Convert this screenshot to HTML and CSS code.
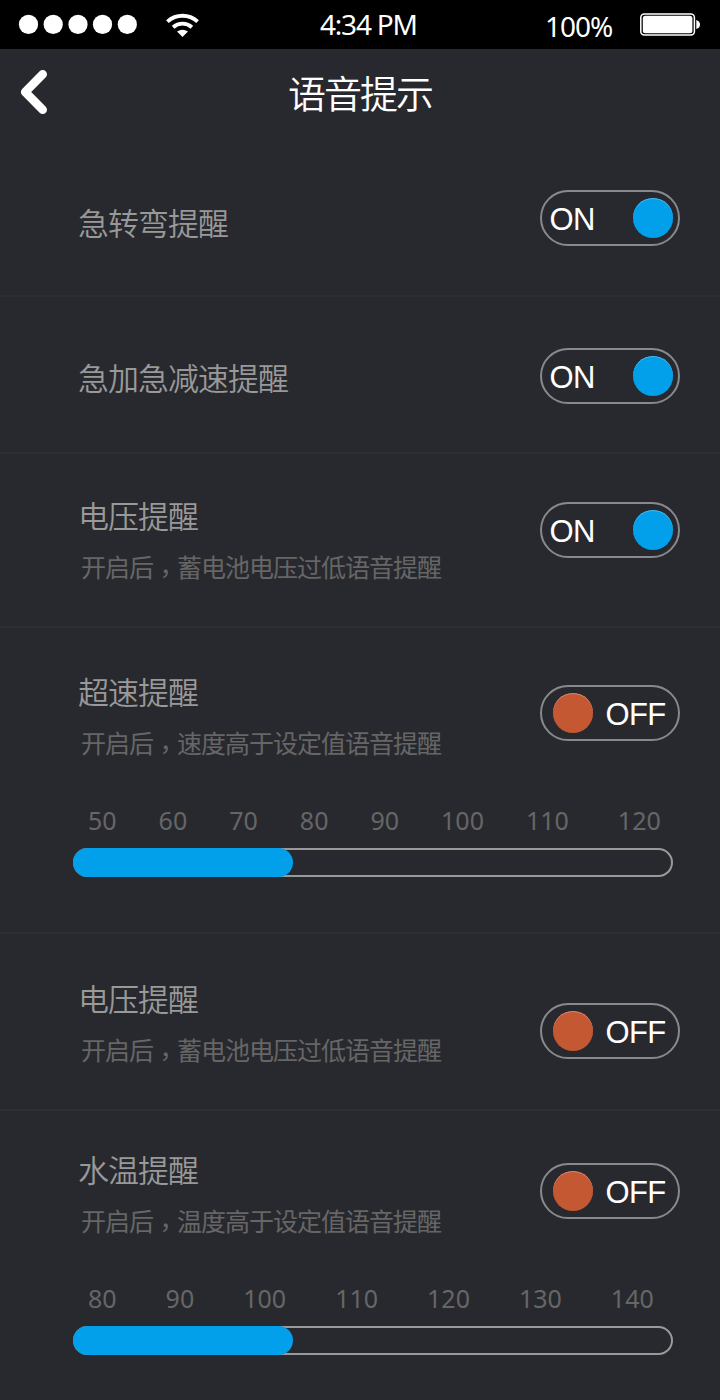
FILE: index.html
```html
<!DOCTYPE html>
<html lang="zh-CN">
<head>
<meta charset="utf-8">
<title>语音提示</title>
<link rel="stylesheet" href="styles.css">
</head>
<body>
<div class="status">
  <svg class="signal" width="120" height="20" viewBox="0 0 120 20" fill="#fff"><circle cx="10.5" cy="10.4" r="9.6"/><circle cx="35.2" cy="10.4" r="9.6"/><circle cx="60" cy="10.4" r="9.6"/><circle cx="84.5" cy="10.4" r="9.6"/><circle cx="109.3" cy="10.4" r="9.6"/></svg>
  <svg class="wifi" width="34" height="24" viewBox="0 0 34 24"><g fill="none" stroke="#fff" stroke-width="3.9"><path d="M1.4 8.6Q8 2.8 16.5 2.8T31.6 8.6"/><path d="M7.1 14.2Q11.2 10.6 16.5 10.6T25.9 14.2"/></g><path d="M11 18.6Q16.5 14.9 22 18.6L16.5 23.9Z" fill="#fff"/></svg>
  <span class="time">4:34 PM</span>
  <span class="percent">100%</span>
  <svg class="battery" width="61" height="24" viewBox="0 0 61 24"><rect x=".8" y="1.9" width="53.6" height="21.2" rx="3.5" fill="none" stroke="#fff" stroke-width="1.5"/><rect x="2.8" y="3.8" width="49.6" height="17.4" rx="2.5" fill="#fff"/><path d="M56.3 8Q60 9 60 12.5T56.3 17Z" fill="#fff"/></svg>
</div>
<header class="nav">
  <svg class="back" width="28" height="46" viewBox="0 0 28 46"><path d="M22.7 5.3L5.2 23L22.7 40.7" fill="none" stroke="#fff" stroke-width="8.6" stroke-linecap="round" stroke-linejoin="round"/></svg>
  <h1 class="heading">语音提示</h1>
</header>
<main>
  <section class="row row-turn">
    <div class="info"><h2 class="title">急转弯提醒</h2></div>
    <div class="toggle on"><span class="label">ON</span><i class="knob"></i></div>
  </section>
  <section class="row row-accel">
    <div class="info"><h2 class="title">急加急减速提醒</h2></div>
    <div class="toggle on"><span class="label">ON</span><i class="knob"></i></div>
  </section>
  <section class="row row-voltage">
    <div class="info"><h2 class="title">电压提醒</h2><p class="desc">开启后<span class="comma" lang="zh-TW">，</span>蓄电池电压过低语音提醒</p></div>
    <div class="toggle on"><span class="label">ON</span><i class="knob"></i></div>
  </section>
  <section class="row row-speed">
    <div class="info"><h2 class="title">超速提醒</h2><p class="desc">开启后<span class="comma" lang="zh-TW">，</span>速度高于设定值语音提醒</p></div>
    <div class="toggle off"><i class="knob"></i><span class="label">OFF</span></div>
    <div class="range">
      <div class="ticks ticks-speed"><span>50</span><span>60</span><span>70</span><span>80</span><span>90</span><span>100</span><span>110</span><span>120</span></div>
      <div class="track"><div class="fill"></div></div>
    </div>
  </section>
  <section class="row row-voltage2">
    <div class="info"><h2 class="title">电压提醒</h2><p class="desc">开启后<span class="comma" lang="zh-TW">，</span>蓄电池电压过低语音提醒</p></div>
    <div class="toggle off"><i class="knob"></i><span class="label">OFF</span></div>
  </section>
  <section class="row row-water">
    <div class="info"><h2 class="title">水温提醒</h2><p class="desc">开启后<span class="comma" lang="zh-TW">，</span>温度高于设定值语音提醒</p></div>
    <div class="toggle off"><i class="knob"></i><span class="label">OFF</span></div>
    <div class="range">
      <div class="ticks ticks-temp"><span>80</span><span>90</span><span>100</span><span>110</span><span>120</span><span>130</span><span>140</span></div>
      <div class="track"><div class="fill"></div></div>
    </div>
  </section>
</main>
</body>
</html>
```
FILE: styles.css
```css
* { box-sizing: border-box; margin: 0; padding: 0; }
html, body { width: 720px; height: 1400px; overflow: hidden; }
body { background: #28292e; font-family: "Noto Sans CJK SC", sans-serif; }
svg { display: block; flex: none; }

.status {
  display: flex;
  align-items: flex-start;
  height: 49px;
  padding-left: 18px;
  background: #000;
  color: #fff;
  font: 28px/36px "Noto Sans", sans-serif;
}
.signal { margin-top: 14px; }
.wifi { margin: 13px 0 0 28px; }
.time { width: 225px; margin: 6px 0 0 120px; letter-spacing: -1.2px; }
.percent { width: 95px; margin-top: 8px; letter-spacing: -1px; }
.battery { margin-top: 12px; }

.nav {
  display: grid;
  grid-template-columns: 60px 1fr 60px;
  height: 86px;
  padding-top: 20px;
}
.back { margin-left: 20px; }
.heading {
  color: #fff;
  font-size: 38px;
  font-weight: 350;
  line-height: 46px;
  letter-spacing: -2px;
  text-align: center;
}

.row {
  display: grid;
  grid-template-columns: 1fr 140px;
  align-content: start;
  align-items: start;
  padding: 0 40px 0 78px;
  border-bottom: 2px solid #2e2f33;
}
.row-turn { height: 162px; --title: 67px; --toggle: 55px; }
.row-accel { height: 157px; --title: 60px; --toggle: 51px; }
.row-voltage { height: 174px; --title: 41px; --toggle: 48px; }
.row-speed { height: 306px; --title: 43px; --toggle: 57px; }
.row-voltage2 { height: 177px; --title: 44px; --toggle: 69px; }
.row-water { height: 289px; border-bottom: 0; --title: 38px; --toggle: 52px; }

.info { padding-top: var(--title); }
.title {
  color: #999;
  font-size: 31px;
  font-weight: 350;
  line-height: 40px;
  letter-spacing: -1px;
}
.desc {
  height: 36px;
  margin-top: 13px;
  padding-left: 3px;
  color: #666;
  font-size: 25px;
  line-height: 36px;
  letter-spacing: -1px;
}
.comma {
  font-family: "Noto Sans CJK TC", sans-serif;
  line-height: 0;
  vertical-align: -6px;
}

.toggle {
  display: flex;
  align-items: center;
  height: 56px;
  margin-top: var(--toggle);
  border: 2px solid #88898d;
  border-radius: 28px;
  color: #fff;
  font: 31px/34px "Liberation Sans", Arial, sans-serif;
  letter-spacing: -0.6px;
}
.on { justify-content: space-between; padding: 0 5px 0 7.5px; }
.off { gap: 12.5px; padding-left: 11px; }
.label { padding-top: 4px; }
.knob { width: 40px; height: 40px; border-radius: 50%; }
.on .knob { background: #029fea; box-shadow: inset 0 1px #43b5eb; }
.off .knob { background: #c45833; box-shadow: inset 0 1px #d28468; }

.range { grid-column: 1 / -1; width: 600px; margin: 43px 0 0 -5px; }
.ticks {
  display: flex;
  height: 36px;
  padding-left: 15px;
  color: #666;
  font: 25px/34px "Noto Sans", sans-serif;
}
.ticks-speed { gap: 42px; }
.ticks-speed span:last-child { margin-left: 7px; }
.ticks-temp { gap: 49px; }
.track {
  height: 29px;
  margin-top: 9px;
  border: 2px solid #999;
  border-radius: 15px;
}
.fill {
  width: 220px;
  height: 29px;
  margin: -2px 0 0 -2px;
  border-radius: 15px;
  background: #029fea;
}
```
